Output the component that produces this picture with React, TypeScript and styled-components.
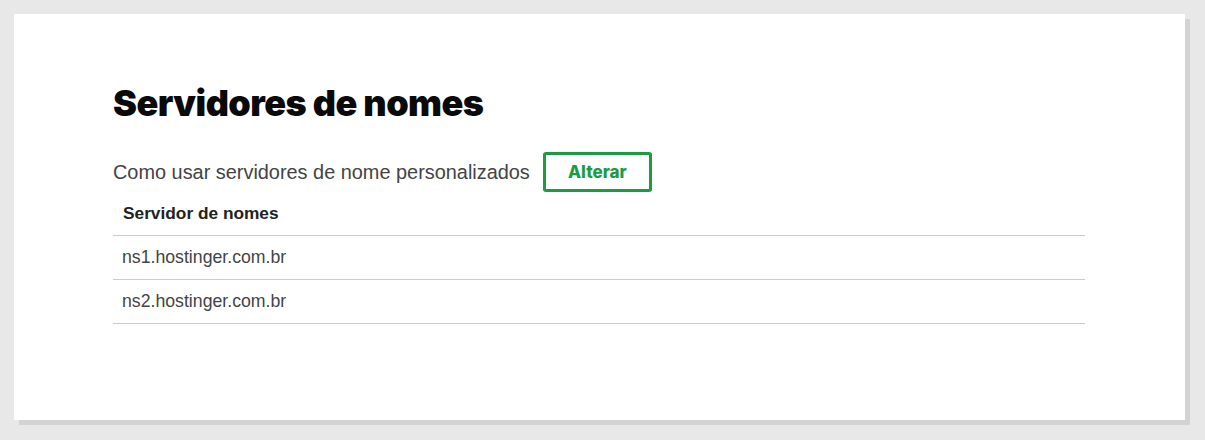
import { createGlobalStyle, styled } from "styled-components";

const servers = ["ns1.hostinger.com.br", "ns2.hostinger.com.br"];

export default function App() {
  return (
    <>
      <GlobalStyle />
      <Page>
        <Card>
          <Title>Servidores de nomes</Title>
          <InfoRow>
            <InfoText>Como usar servidores de nome personalizados</InfoText>
            <ChangeButton>Alterar</ChangeButton>
          </InfoRow>
          <Table>
            <HeaderCell>Servidor de nomes</HeaderCell>
            {servers.map((name) => (
              <Row key={name}>{name}</Row>
            ))}
          </Table>
        </Card>
      </Page>
    </>
  );
}

const GlobalStyle = createGlobalStyle`
  html, body {
    margin: 0;
    padding: 0;
    background: #e8e8e8;
  }
  body {
    font-family: "Liberation Sans", Arial, sans-serif;
  }
`;

const Page = styled.div`
  width: 1205px;
  height: 440px;
  padding: 14px;
  box-sizing: border-box;
`;

const Card = styled.div`
  width: 1171px;
  height: 406px;
  box-sizing: border-box;
  background: #ffffff;
  box-shadow: 5px 5px 0 #d3d3d3;
  padding: 67px 100px 0 99px;
  display: flex;
  flex-direction: column;
`;

const Title = styled.h1`
  margin: 0;
  font-family: Inter, "Noto Sans", sans-serif;
  font-weight: 900;
  font-size: 36px;
  line-height: 44px;
  color: #0a0a0a;
  letter-spacing: -0.55px;
`;

const InfoRow = styled.div`
  display: flex;
  align-items: center;
  gap: 13px;
  margin-top: 27px;
`;

const InfoText = styled.span`
  font-size: 19.9px;
  color: #444444;
`;

const ChangeButton = styled.button`
  width: 109px;
  height: 40px;
  box-sizing: border-box;
  border: 3px solid #1b9c42;
  border-radius: 3px;
  background: #ffffff;
  color: #1b9c42;
  font-family: Inter, "Noto Sans", sans-serif;
  font-weight: 800;
  font-size: 17px;
  cursor: pointer;
`;

const Table = styled.div`
  display: flex;
  flex-direction: column;
`;

const HeaderCell = styled.div`
  height: 43px;
  display: flex;
  align-items: center;
  padding-left: 10px;
  font-size: 17.3px;
  font-weight: 700;
  color: #222222;
  border-bottom: 1px solid #cccccc;
`;

const Row = styled.div`
  height: 43px;
  display: flex;
  align-items: center;
  padding-left: 9px;
  font-size: 17.7px;
  color: #444444;
  border-bottom: 1px solid #cccccc;
`;
